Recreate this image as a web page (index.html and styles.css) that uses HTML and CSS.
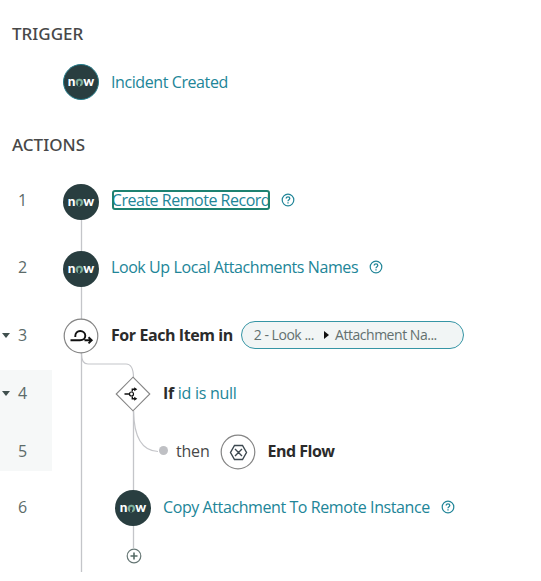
FILE: index.html
```html
<!DOCTYPE html>
<html lang="en">
<head>
<meta charset="utf-8">
<title>Flow</title>
<link rel="stylesheet" href="styles.css">
</head>
<body>
<svg width="0" height="0" class="defs">
  <symbol id="help" viewBox="0 0 14 14"><circle cx="7" cy="7" r="5.8" fill="none" stroke="currentColor" stroke-width="1.2"/><path d="M5.2 5.6C5.2 3.4 8.8 3.4 8.8 5.6C8.8 6.8 7 6.7 7 8.2M7 9.2V10.5" fill="none" stroke="currentColor" stroke-width="1.3"/></symbol>
</svg>
<main class="flow">
  <svg class="wires" width="541" height="581" viewBox="0 0 541 581" fill="none">
    <path d="M81.500 202V572M133.500 411V548" stroke="#c4c5c9" stroke-width="1.3"/>
    <path d="M81.500 354Q81.500 364 88 364H126Q133.500 364 133.500 378M133.500 411C134 438 143 451 158 451.500" stroke="#c4c5c9" stroke-width="1.2"/>
    <circle cx="163.500" cy="450.500" r="4.500" fill="#bfc0c4"/>
  </svg>
  <h2 class="heading">TRIGGER</h2>
  <div class="row trigger"><span class="num"></span><span class="now"><b>n</b><i>o</i><b>w</b></span><a class="label">Incident Created</a></div>
  <h2 class="heading actions">ACTIONS</h2>
  <div class="row r1"><span class="num">1</span><span class="now"><b>n</b><i>o</i><b>w</b></span><a class="focused"><span class="label">Create Remote Record</span></a><svg class="help"><use href="#help"/></svg></div>
  <div class="row r2"><span class="num">2</span><span class="now"><b>n</b><i>o</i><b>w</b></span><a class="label">Look Up Local Attachments Names</a><svg class="help"><use href="#help"/></svg></div>
  <div class="row r3"><span class="num open">3</span>
    <svg class="node" viewBox="0 0 36 36" fill="none"><circle cx="18" cy="18" r="16.800" fill="#fff" stroke="#858585" stroke-width="1.200"/><path d="M7.500 22.300H17C20 22.300 22.300 20.500 22.300 17.800C22.300 15 20 13 17.200 13C14.300 13 12.300 15 12.300 18V19M21.500 22.300H28.500M25.500 19.200L28.700 22.300L25.500 25.400" stroke="#111" stroke-width="1.900"/></svg>
    <strong class="label">For Each Item in</strong>
    <span class="pill"><span>2 - Look ...</span><span class="arrow"></span><span>Attachment Na...</span></span></div>
  <div class="row r4"><span class="num open">4</span>
    <svg class="node nested" viewBox="0 0 36 36" fill="none"><path d="M18 1.200L34.800 18L18 34.800L1.200 18Z" fill="#fff" stroke="#858585" stroke-width="1.100"/><path d="M9.500 18H14.500M17.300 15.500V13.200H20M17.300 20.500V22.800H20" stroke="#111" stroke-width="1.400"/><circle cx="16.500" cy="18" r="2" stroke="#111" stroke-width="1.200"/><path d="M19.200 11.200L22.300 13.200L19.200 15.200ZM19.200 20.800L22.300 22.800L19.200 24.800Z" fill="#111"/></svg>
    <span class="condition"><strong>If</strong> <a>id is null</a></span></div>
  <div class="row r5"><span class="num">5</span><span class="then">then</span>
    <svg class="node" viewBox="0 0 36 36" fill="none"><circle cx="18" cy="18" r="16.800" fill="#fff" stroke="#858585" stroke-width="1.200"/><path d="M14.500 11.500H22.500L26.500 18.500L22.500 25.500H14.500L10.500 18.500ZM15 15L22 22M22 15L15 22" stroke="#3c4850" stroke-width="1.400"/></svg>
    <strong class="label">End Flow</strong></div>
  <div class="row r6"><span class="num">6</span><span class="now nested"><b>n</b><i>o</i><b>w</b></span><a class="label">Copy Attachment To Remote Instance</a><svg class="help"><use href="#help"/></svg></div>
  <div class="row add"><svg width="16" height="16" viewBox="0 0 16 16"><circle cx="8" cy="8" r="6.800" fill="#fff" stroke="#667775" stroke-width="1.200"/><path d="M8 4.500V11.500M4.500 8H11.500" stroke="#566b66" stroke-width="1.600"/></svg></div>
</main>
</body>
</html>
```
FILE: styles.css
```css
* { box-sizing: border-box; }
body { margin: 0; background: #fff; font: 16px/24px "Open Sans", "Noto Sans", sans-serif; color: #2b2b2b; }
.defs { position: absolute; }
.flow { position: relative; width: 541px; height: 581px; overflow: hidden; padding-top: 22px; }
.wires { position: absolute; left: 0; top: 0; z-index: 1; }
.heading { margin: 0 0 0 12px; height: 24px; font-family: "Noto Sans", sans-serif; font-size: 17px; font-weight: 500; color: #484848; }
.row { display: flex; align-items: center; white-space: nowrap; }
.row > :not(.num) { position: relative; z-index: 2; }
.trigger { height: 36px; margin-top: 18px; }
.actions { margin-top: 33px; }
.r1 { height: 68px; margin-top: 9px; }
.r2 { height: 66px; }
.r3 { height: 70px; }
.r4 { height: 46px; }
.r5 { height: 55px; padding-top: 15px; }
.r6 { height: 72px; }
.add { height: 26px; padding-left: 125.500px; }
.num { position: relative; width: 52px; padding-left: 18px; margin-right: 11px; flex: none; color: #5c6b69; }
.r4, .r5 { background: linear-gradient(#f6f8f8, #f6f8f8) 0 0 / 52px 100% no-repeat; }
.open::before { content: ""; position: absolute; left: 2px; top: 10px; border: 4px solid transparent; border-top: 5px solid #40504e; border-bottom: 0; }
a { color: #218598; }
.label { letter-spacing: -.41px; }
.condition { letter-spacing: -.28px; }
strong { font-weight: 700; }
.now { display: flex; align-items: center; justify-content: center; width: 36px; height: 36px; margin-right: 12px; flex: none; border-radius: 50%; background: #293e40; color: #fff; font: bold 13.500px/20px "Lato", sans-serif; padding-bottom: 3px; }
.trigger .now { border: 1px solid #237d8c; }
.r1 .now, .r2 .now { top: 2px; }
.r6 .now { top: 1px; }
.now i { position: relative; font-style: normal; color: #81b5a1; -webkit-text-stroke: .4px #81b5a1; }
.now i::after { content: ""; position: absolute; left: 3px; bottom: 5px; width: 2px; height: 2px; background: #293e40; }
.node { width: 36px; height: 36px; margin-right: 12px; flex: none; }
.r3 .node, .r4 .node, .r5 .node { top: 1px; }
.nested { margin-left: 52px; }
.focused { display: flex; align-items: center; justify-content: center; width: 158px; height: 20px; margin-left: 1px; border: 2px solid #1d8170; border-radius: 3px; overflow: hidden; }
.focused .label { letter-spacing: -.48px; }
.help { width: 14px; height: 14px; margin-left: 11px; flex: none; color: #218598; }
.r3 .label { letter-spacing: -.43px; }
.pill { display: flex; align-items: center; width: 223px; height: 28px; margin-left: 8px; padding-left: 12px; border: 1.500px solid #3595a5; border-radius: 15px; background: #f1f5f5; color: #63706f; font-size: 14px; letter-spacing: -.47px; }
.arrow { margin: 0 6px 0 10px; border: 4px solid transparent; border-left: 5px solid #111; border-right: 0; }
.then { margin-left: 113px; margin-right: 10px; color: #484848; letter-spacing: -.2px; }
.r5 .label { letter-spacing: -.5px; }
```
